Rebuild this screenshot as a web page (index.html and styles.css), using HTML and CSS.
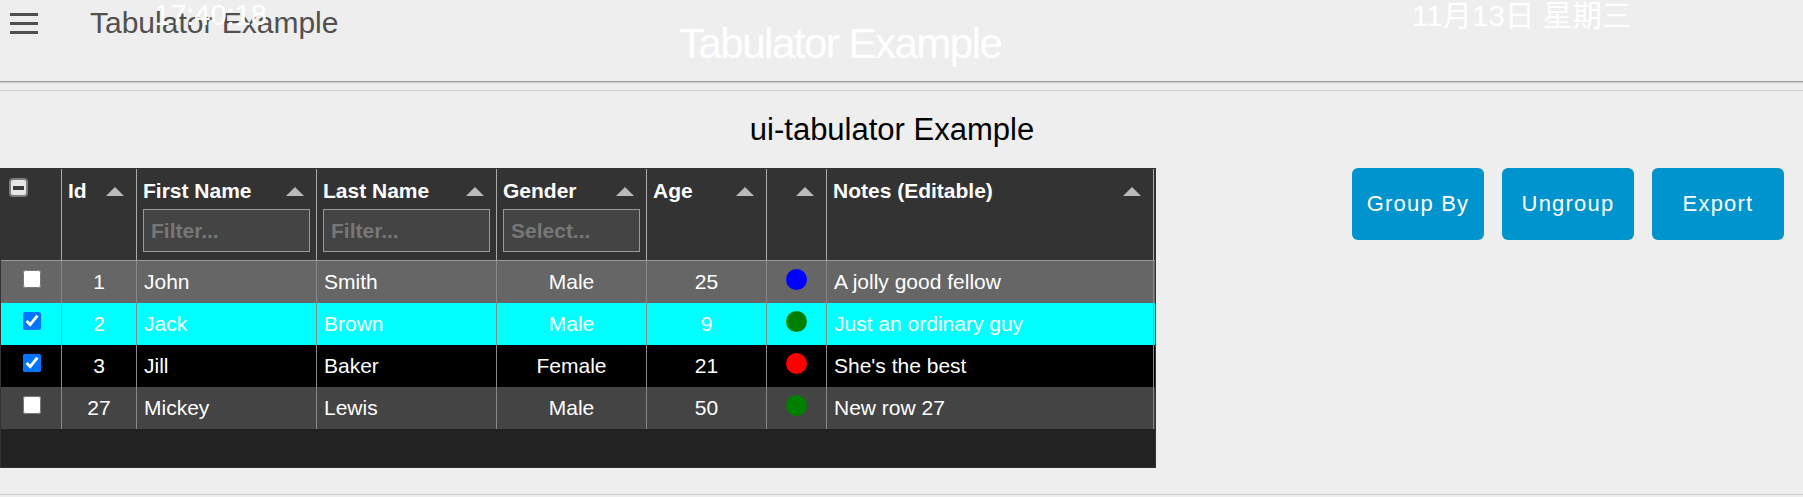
FILE: index.html
```html
<!DOCTYPE html>
<html lang="en">
<head>
<meta charset="utf-8">
<title>Tabulator Example</title>
<link rel="stylesheet" href="styles.css">
</head>
<body>
<div class="toolbar">
  <div class="menu-icon"><span></span><span></span><span></span></div>
  <div class="app-title">Tabulator Example</div>
  <div class="clock-time">17:40:18</div>
  <div class="clock-title">Tabulator Example</div>
  <div class="clock-date">11月13日 星期三</div>
</div>
<div class="divider"></div>
<main class="group">
  <h2 class="group-title">ui-tabulator Example</h2>
  <div class="group-body">
    <div class="tabulator">
      <div class="t-header">
        <div class="hcell hsel"><span class="hdr-check"></span></div>
        <div class="hcell"><div class="htitle"><span>Id</span><i class="arrow"></i></div></div>
        <div class="hcell"><div class="htitle"><span>First Name</span><i class="arrow"></i></div><input class="hfilter" type="text" placeholder="Filter..."></div>
        <div class="hcell"><div class="htitle"><span>Last Name</span><i class="arrow"></i></div><input class="hfilter" type="text" placeholder="Filter..."></div>
        <div class="hcell"><div class="htitle"><span>Gender</span><i class="arrow"></i></div><input class="hfilter" type="text" placeholder="Select..."></div>
        <div class="hcell"><div class="htitle"><span>Age</span><i class="arrow"></i></div></div>
        <div class="hcell"><div class="htitle htitle-end"><i class="arrow"></i></div></div>
        <div class="hcell hlast"><div class="htitle"><span>Notes (Editable)</span><i class="arrow"></i></div></div>
      </div>
      <div class="t-body">
        <div class="row row-grey">
          <div class="cell center"><input class="rcheck" type="checkbox"></div>
          <div class="cell center">1</div>
          <div class="cell">John</div>
          <div class="cell">Smith</div>
          <div class="cell center">Male</div>
          <div class="cell center">25</div>
          <div class="cell center"><span class="dot dot-blue"></span></div>
          <div class="cell">A jolly good fellow</div>
        </div>
        <div class="row row-cyan">
          <div class="cell center"><input class="rcheck" type="checkbox" checked></div>
          <div class="cell center">2</div>
          <div class="cell">Jack</div>
          <div class="cell">Brown</div>
          <div class="cell center">Male</div>
          <div class="cell center">9</div>
          <div class="cell center"><span class="dot dot-green"></span></div>
          <div class="cell">Just an ordinary guy</div>
        </div>
        <div class="row row-black">
          <div class="cell center"><input class="rcheck" type="checkbox" checked></div>
          <div class="cell center">3</div>
          <div class="cell">Jill</div>
          <div class="cell">Baker</div>
          <div class="cell center">Female</div>
          <div class="cell center">21</div>
          <div class="cell center"><span class="dot dot-red"></span></div>
          <div class="cell">She's the best</div>
        </div>
        <div class="row row-dark">
          <div class="cell center"><input class="rcheck" type="checkbox"></div>
          <div class="cell center">27</div>
          <div class="cell">Mickey</div>
          <div class="cell">Lewis</div>
          <div class="cell center">Male</div>
          <div class="cell center">50</div>
          <div class="cell center"><span class="dot dot-green"></span></div>
          <div class="cell">New row 27</div>
        </div>
      </div>
      <div class="t-empty"></div>
    </div>
    <div class="buttons">
      <button class="btn">Group By</button>
      <button class="btn">Ungroup</button>
      <button class="btn">Export</button>
    </div>
  </div>
</main>
<div class="footer-line"></div>
</body>
</html>
```
FILE: styles.css
```css
* { box-sizing: border-box; }
html, body { margin: 0; padding: 0; }
body {
  background: #eeeeee;
  font-family: "Liberation Sans", Arial, sans-serif;
  width: 1803px;
  height: 497px;
  overflow: hidden;
}

/* toolbar */
.toolbar {
  position: relative;
  height: 82px;
  display: flex;
  align-items: flex-start;
  background: #eeeeee;
  border-bottom: 1px solid #9c9c9c;
  box-shadow: 0 1px 1px rgba(0,0,0,0.12);
}
.menu-icon {
  margin: 13px 0 0 10px;
  width: 28px;
  height: 21px;
  display: flex;
  flex-direction: column;
  justify-content: space-between;
}
.menu-icon span { display: block; height: 3px; background: #4f4f4f; }
.app-title {
  margin: 6px 0 0 52px;
  font-size: 30px;
  color: #505050;
  white-space: nowrap;
}
.clock-time, .clock-title, .clock-date {
  position: absolute;
  color: #ffffff;
  white-space: nowrap;
}
.clock-time { left: 154px; top: 1px; font-size: 29px; line-height: 29px; }
.clock-title { left: 679px; top: 23px; font-size: 42px; line-height: 42px; letter-spacing: -1.5px; }
.clock-date {
  left: 1412px; top: 1px; font-size: 29.5px; line-height: 29px;
  font-family: "Liberation Sans", "Noto Sans CJK SC", sans-serif;
}

.divider { margin-top: 8px; height: 1px; background: #cfcfcf; }

/* group */
.group { width: 1784px; }
.group-title {
  margin: 21px 0 21px 0;
  font-size: 31px;
  line-height: 35px;
  font-weight: normal;
  color: #000;
  text-align: center;
}
.group-body { display: flex; align-items: flex-start; }

/* table */
.tabulator {
  width: 1156px;
  border: 1px solid #333;
  background: #222;
  color: #fff;
  font-size: 21px;
}
.t-header, .row {
  display: grid;
  grid-template-columns: 61px 75px 180px 180px 150px 120px 60px 327px;
}
.t-header {
  background: #333;
  border-bottom: 1px solid #999;
}
.hcell {
  height: 91px;
  padding: 10px 6px 8px 6px;
  border-right: 1px solid #aaa;
  display: flex;
  flex-direction: column;
}
.hcell.hlast { border-right: 1px solid #aaa; }
.hcell.hsel { padding: 9px 0 0 8px; }
.hdr-check {
  display: block;
  width: 19px;
  height: 19px;
  border: 2px solid #7d7d7d;
  border-radius: 4px;
  background: #e6e6e6;
  position: relative;
}
.hdr-check::after {
  content: "";
  position: absolute;
  left: 2px; right: 2px; top: 5.5px;
  height: 4px;
  background: #3a3a3a;
}
.htitle {
  display: flex;
  align-items: center;
  justify-content: space-between;
  height: 24px;
  line-height: 24px;
  font-weight: bold;
  white-space: nowrap;
}
.htitle-end { justify-content: flex-end; }
.arrow {
  display: block;
  width: 0; height: 0;
  border-left: 9px solid transparent;
  border-right: 9px solid transparent;
  border-bottom: 9px solid #bbb;
  margin-right: 6px;
  flex: none;
}
.hfilter {
  margin-top: 6px;
  width: 100%;
  height: 43px;
  border: 1px solid #999;
  background: #444;
  padding: 0 7px;
  font-family: inherit;
  font-size: 21px;
  font-weight: bold;
  color: #fff;
  outline: none;
}
.hfilter::placeholder { color: #777; opacity: 1; }

.row { height: 42px; }
.row-grey { background: #666; }
.row-cyan { background: #00ffff; }
.row-black { background: #000; }
.row-dark { background: #444; }
.cell {
  border-right: 1px solid #888;
  display: flex;
  align-items: center;
  padding: 0 7px;
  white-space: nowrap;
  overflow: hidden;
}
.cell.center { justify-content: center; }
.rcheck {
  width: 18px; height: 18px;
  margin: 0 0 6px 2px;
}
.dot {
  display: block;
  width: 21px; height: 21px;
  border-radius: 50%;
  margin-bottom: 6px;
}
.dot-blue { background: #0000ff; }
.dot-green { background: #008000; }
.dot-red { background: #ff0000; }
.t-empty { height: 38px; background: #222; }

/* buttons */
.buttons { margin-left: auto; display: flex; gap: 18px; }
.btn {
  width: 132px;
  height: 72px;
  border: none;
  border-radius: 6px;
  background: #0094ce;
  color: #fff;
  font-family: inherit;
  font-size: 22px;
  letter-spacing: 1.2px;
  padding: 0;
}

.footer-line { margin-top: 26px; height: 1px; background: #cfcfcf; }
```
